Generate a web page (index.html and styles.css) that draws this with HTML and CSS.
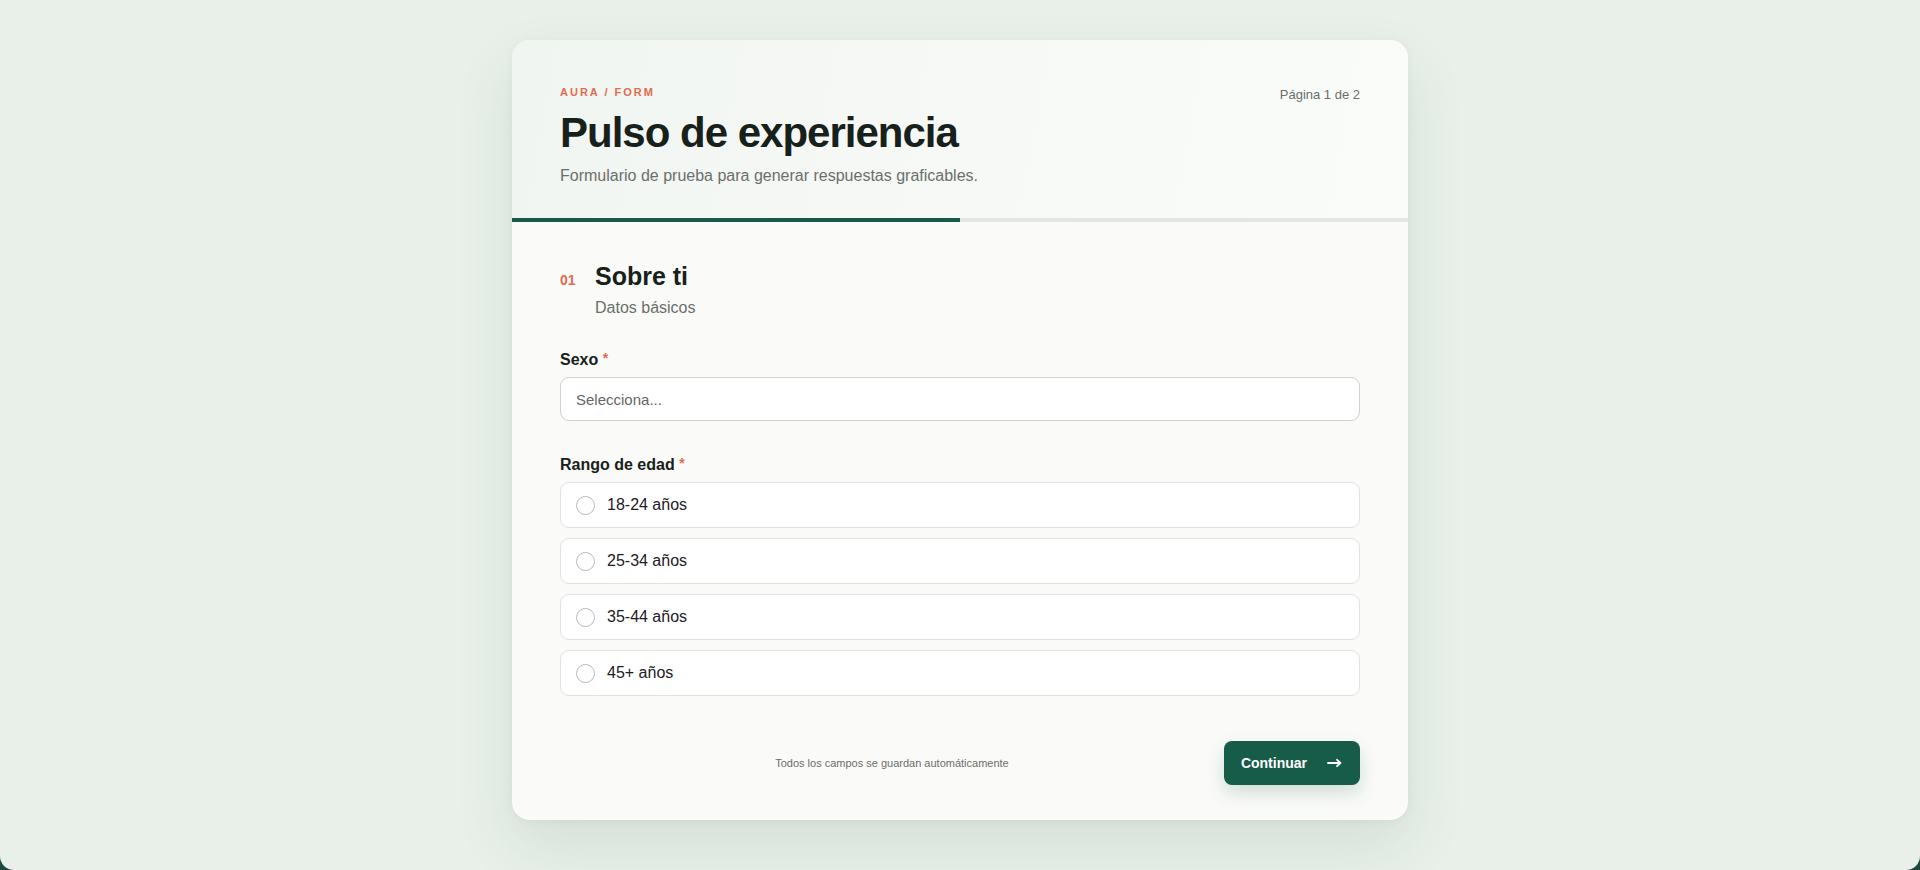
FILE: index.html
```html
<!DOCTYPE html>
<html lang="es">
<head>
  <meta charset="UTF-8">
  <meta name="viewport" content="width=device-width, initial-scale=1.0">
  <title>Pulso de experiencia</title>
  <link rel="stylesheet" href="styles.css">
</head>
<body>
  <div class="page">
    <main class="card">
      <header class="card-head">
        <div class="head-text">
          <p class="eyebrow">AURA / FORM</p>
          <h1>Pulso de experiencia</h1>
          <p class="lead">Formulario de prueba para generar respuestas graficables.</p>
        </div>
        <span class="page-count">Página 1 de 2</span>
      </header>
      <div class="progress"><div class="progress-fill" style="width: 50%"></div></div>

      <form class="card-body">
        <div class="section-head">
          <span class="section-num">01</span>
          <div>
            <h2>Sobre ti</h2>
            <p class="section-sub">Datos básicos</p>
          </div>
        </div>

        <div class="field">
          <label class="field-label" for="sexo">Sexo <span class="req">*</span></label>
          <select id="sexo" name="sexo" class="select">
            <option value="">Selecciona...</option>
            <option value="f">Femenino</option>
            <option value="m">Masculino</option>
            <option value="o">Otro</option>
          </select>
        </div>

        <div class="field">
          <span class="field-label">Rango de edad <span class="req">*</span></span>
          <div class="choices">
            <label class="choice"><input type="radio" name="edad" value="18-24"><span>18-24 años</span></label>
            <label class="choice"><input type="radio" name="edad" value="25-34"><span>25-34 años</span></label>
            <label class="choice"><input type="radio" name="edad" value="35-44"><span>35-44 años</span></label>
            <label class="choice"><input type="radio" name="edad" value="45+"><span>45+ años</span></label>
          </div>
        </div>

        <div class="form-foot">
          <span class="back-slot"></span>
          <p class="autosave">Todos los campos se guardan automáticamente</p>
          <button type="submit" class="btn-next">
            Continuar
            <svg width="15" height="10" viewBox="0 0 15 10" fill="none" stroke="#fff" stroke-width="1.8" stroke-linecap="round" stroke-linejoin="round">
              <path d="M1 5h12.5M10 1.8l3.5 3.2-3.5 3.2"/>
            </svg>
          </button>
        </div>
      </form>
    </main>
  </div>
</body>
</html>
```

FILE: styles.css
```css
html, body {
  margin: 0;
  padding: 0;
  background: #1c4a3c;
}
body {
  font-family: "Liberation Sans", Arial, sans-serif;
  color: #18201c;
}
.page {
  box-sizing: border-box;
  min-height: 100vh;
  padding: 40px 0;
  background: #e9f0ea;
  border-radius: 0 0 14px 14px;
}
.card {
  width: 896px;
  margin: 0 auto;
  background: #fafbf8;
  border-radius: 18px;
  overflow: hidden;
  box-shadow: 0 26px 60px rgba(30, 70, 50, 0.10), 0 2px 8px rgba(30, 70, 50, 0.05);
}
.card-head {
  display: flex;
  justify-content: space-between;
  align-items: flex-start;
  padding: 45px 48px 30px;
  background: linear-gradient(100deg, #f1f5f2 0%, #f6f9f6 50%, #fafcfa 100%);
}
.eyebrow {
  margin: 0;
  font-size: 11px;
  line-height: 14px;
  font-weight: 700;
  letter-spacing: 2px;
  color: #e36b4f;
}
h1 {
  margin: 11px 0 0;
  font-size: 42px;
  line-height: 46px;
  font-weight: 700;
  letter-spacing: -1px;
  color: #17201b;
}
.lead {
  margin: 8px 0 0;
  font-size: 16px;
  line-height: 24px;
  color: #6b6f6c;
}
.page-count {
  margin-top: 2px;
  font-size: 13px;
  line-height: 16px;
  color: #6a6d6b;
}
.progress {
  height: 4px;
  background: #e1e7e3;
}
.progress-fill {
  height: 100%;
  background: #165a47;
}
.card-body {
  padding: 39px 48px 35px;
}
.section-head {
  display: flex;
  align-items: baseline;
  gap: 20px;
  margin-bottom: 29px;
}
.section-num {
  width: 15px;
  font-size: 14px;
  font-weight: 700;
  color: #e36b4f;
}
h2 {
  margin: 0;
  font-size: 25px;
  line-height: 30px;
  font-weight: 700;
  color: #17201b;
}
.section-sub {
  margin: 6px 0 0;
  font-size: 16px;
  line-height: 22px;
  color: #6b6f6c;
}
.field + .field {
  margin-top: 32px;
}
.field-label {
  display: block;
  margin-bottom: 7px;
  font-size: 16px;
  line-height: 20px;
  font-weight: 700;
  color: #17201b;
}
.req {
  color: #e36b4f;
  font-size: 14px;
  vertical-align: 2px;
}
.select {
  box-sizing: border-box;
  display: block;
  width: 100%;
  height: 44px;
  padding: 0 15px;
  font-family: inherit;
  font-size: 15px;
  color: #666;
  background: #fff;
  border: 1px solid #cfd2ce;
  border-radius: 9px;
  appearance: none;
  -webkit-appearance: none;
  outline: none;
}
.choices {
  display: flex;
  flex-direction: column;
  gap: 10px;
}
.choice {
  box-sizing: border-box;
  display: flex;
  align-items: center;
  gap: 12px;
  height: 46px;
  padding: 0 15px;
  background: #fff;
  border: 1px solid #e2e3df;
  border-radius: 9px;
  font-size: 16px;
  color: #1d201e;
  cursor: pointer;
}
.choice input {
  appearance: none;
  -webkit-appearance: none;
  box-sizing: border-box;
  width: 19px;
  height: 19px;
  margin: 0;
  border: 1.5px solid #b8bab8;
  border-radius: 50%;
  background: #fff;
}
.choice input:checked {
  border: 5px solid #165a47;
}
.form-foot {
  display: flex;
  justify-content: space-between;
  align-items: center;
  margin-top: 45px;
}
.back-slot {
  width: 0;
}
.autosave {
  margin: 0;
  font-size: 11px;
  color: #6a6d6b;
}
.btn-next {
  display: flex;
  align-items: center;
  gap: 20px;
  height: 44px;
  padding: 0 18px 0 17px;
  font-family: inherit;
  font-size: 14px;
  font-weight: 700;
  color: #fff;
  background: #175c49;
  border: none;
  border-radius: 8px;
  box-shadow: 0 8px 18px rgba(22, 90, 70, 0.18);
  cursor: pointer;
}
```
